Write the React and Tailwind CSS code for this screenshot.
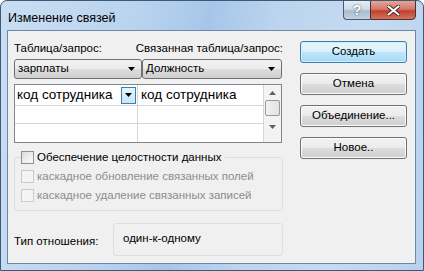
import React from "react";

const Check = ({ disabled, label }) => (
  <div className="flex items-center h-[19px]">
    <div
      className={`w-[13px] h-[13px] border ${
        disabled ? "border-[#c6cbd0] bg-[#f4f4f4]" : "border-[#8e8f8f] bg-[linear-gradient(135deg,#dcdcdc,#fbfbfb)]"
      }`}
    />
    <span className={`ml-[3px] whitespace-nowrap ${disabled ? "text-[#8d8d8d]" : "text-black"}`}>{label}</span>
  </div>
);

const Btn = ({ children, main }) => (
  <div
    className={`h-[22px] w-[107px] flex items-center justify-center rounded-[3px] border ${
      main
        ? "border-[#3c7fb1] bg-[linear-gradient(#eaf6fd_0%,#d9f0fc_50%,#bee6fd_51%,#a7d9f5_100%)] shadow-[inset_0_0_0_1px_#cfeefc]"
        : "border-[#707070] bg-[linear-gradient(#f2f2f2_0%,#ebebeb_50%,#dddddd_51%,#cfcfcf_100%)] shadow-[inset_0_0_0_1px_#fcfcfc]"
    }`}
  >
    {children}
  </div>
);

const Combo = ({ value, w }) => (
  <div
    className={`${w} h-[20px] flex items-center justify-between rounded-[3px] border border-[#707070] bg-[linear-gradient(#f2f2f2_0%,#ebebeb_50%,#dddddd_51%,#cfcfcf_100%)] pl-[3px] pr-[6px]`}
  >
    <span>{value}</span>
    <svg width="7" height="4" viewBox="0 0 7 4">
      <path d="M0 0h7L3.5 4z" fill="#000" />
    </svg>
  </div>
);

export default function App() {
  return (
    <div
      className="w-[424px] h-[271px] flex flex-col rounded-t-[7px] border border-[#3f5873] bg-[linear-gradient(100deg,#c9def3_0%,#b9d3ee_30%,#a6c6e9_45%,#bcd4ee_60%,#c6dbf2_80%,#b7d1ed_100%)] text-[11px] text-black overflow-hidden"
      style={{ fontFamily: '"Liberation Sans", Arial, sans-serif' }}
    >
      <div className="h-[29px] flex items-start justify-between">
        <span className="ml-[7px] mt-[10px] text-[12.5px] leading-[15px]">Изменение связей</span>
        <div className="flex mr-[7px] -mt-[1px]">
          <div className="w-[27px] h-[20px] rounded-bl-[4px] border border-r-0 border-[#4b5a6e] bg-[linear-gradient(#e3ecf5_0%,#cfdbe8_45%,#a9bbcf_55%,#c2d2e2_100%)] flex items-center justify-center text-[14px] font-bold text-white [text-shadow:0_0_2px_#33414f]">
            ?
          </div>
          <div className="w-[46px] h-[20px] rounded-br-[4px] border border-[#4b3030] bg-[linear-gradient(#e5a699_0%,#d3796b_45%,#c2412f_55%,#d5735d_100%)] flex items-center justify-center">
            <svg width="13" height="11" viewBox="0 0 13 11">
              <path d="M1.5 1.5l10 8M11.5 1.5l-10 8" stroke="#3a1a14" strokeWidth="3.6" strokeLinecap="round" />
              <path d="M1.5 1.5l10 8M11.5 1.5l-10 8" stroke="#fff" strokeWidth="2.2" strokeLinecap="round" />
            </svg>
          </div>
        </div>
      </div>

      <div className="ml-[6px] mr-[7px] h-[234px] border border-[#6f88a5] bg-[#f0f0f0] flex">
        <div className="ml-[6px] flex flex-col w-[269px]">
          <div className="mt-[10px] h-[18px] flex leading-[15px] text-[11.5px] whitespace-nowrap">
            <span className="w-[128px]">Таблица/запрос:</span>
            <span>Связанная таблица/запрос:</span>
          </div>
          <div className="flex text-[11.5px]">
            <Combo value="зарплаты" w="w-[128px]" />
            <Combo value="Должность" w="w-[140px]" />
          </div>

          <div className="mt-[5px] w-[268px] h-[59px] border border-[#828790] bg-white flex text-[13.5px] whitespace-nowrap">
            <div className="w-[123px] flex flex-col border-r border-[#d5d5d5]">
              <div className="h-[21px] border-b border-[#d5d5d5] flex items-center justify-between pl-[2px] pr-[1px]">
                <span className="leading-[18px]">код сотрудника</span>
                <div className="w-[15px] h-[17px] border border-[#3c7fb1] bg-[linear-gradient(#e5f4fc,#c4e5f6)] flex items-center justify-center">
                  <svg width="7" height="4" viewBox="0 0 7 4">
                    <path d="M0 0h7L3.5 4z" fill="#000" />
                  </svg>
                </div>
              </div>
              <div className="h-[18px] border-b border-[#d5d5d5]" />
              <div className="flex-1" />
            </div>
            <div className="w-[126px] flex flex-col border-r border-[#d5d5d5]">
              <div className="h-[21px] border-b border-[#d5d5d5] flex items-center pl-[3px]">
                <span className="leading-[18px]">код сотрудника</span>
              </div>
              <div className="h-[18px] border-b border-[#d5d5d5]" />
              <div className="flex-1" />
            </div>
            <div className="flex-1 flex flex-col items-center bg-[#f3f3f3]">
              <svg className="mt-[6px]" width="7" height="4" viewBox="0 0 7 4">
                <path d="M3.5 0L7 4H0z" fill="#606060" />
              </svg>
              <div className="mt-[5px] w-[15px] h-[16px] rounded-[2px] border border-[#9a9a9a] bg-[linear-gradient(90deg,#f2f2f2,#e2e2e2)]" />
              <svg className="mt-[9px]" width="7" height="4" viewBox="0 0 7 4">
                <path d="M0 0h7L3.5 4z" fill="#606060" />
              </svg>
            </div>
          </div>

          <div className="mt-[14px] h-[54px] relative rounded-[3px] border border-[#d5dfe5] flex flex-col pl-[6px] pt-[5px] text-[11.5px]">
            <div className="absolute -top-[10px] left-[6px] bg-[#f0f0f0] pr-[4px]">
              <Check label="Обеспечение целостности данных" />
            </div>
            <div className="mt-[4px]">
              <Check disabled label="каскадное обновление связанных полей" />
              <Check disabled label="каскадное удаление связанных записей" />
            </div>
          </div>

          <div className="mt-[12px] flex items-center text-[11.5px]">
            <span className="w-[99px] mt-[4px]">Тип отношения:</span>
            <div className="w-[170px] h-[33px] rounded-[3px] border border-[#dcdfe3] pl-[9px] pt-[6px]">
              один-к-одному
            </div>
          </div>
        </div>

        <div className="ml-[17px] mt-[10px] flex flex-col gap-[10px] text-[11.5px]">
          <Btn main>Создать</Btn>
          <Btn>Отмена</Btn>
          <Btn>Объединение...</Btn>
          <Btn>Новое..</Btn>
        </div>
      </div>
    </div>
  );
}
